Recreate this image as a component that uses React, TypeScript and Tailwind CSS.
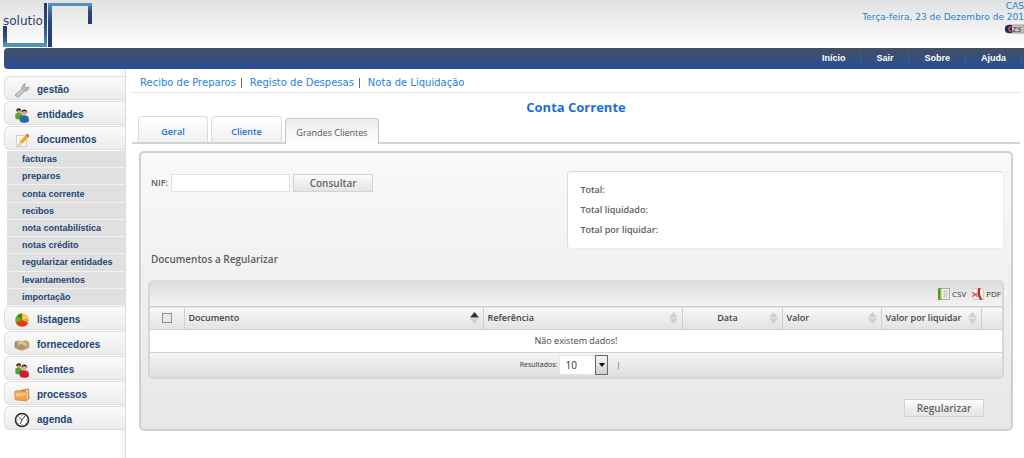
import { ReactNode } from "react";

type MenuItem = {
  label: string;
  icon: ReactNode;
  children?: string[];
};

const Wrench = () => (
  <svg viewBox="0 0 16 16" className="size-4">
    <path d="M2.600 14.800.9 13 7.800 7.200C7.200 4.800 8.600 2.200 11.500 1.500L10.500 4.300 12 5.800l2.900-1c.3 2.900-2.100 4.900-4.500 4.500L4.500 14.900Z" fill="#b8b8b8" stroke="#9a9a9a" strokeWidth=".7" />
    <path d="m3 13.500 6.500-5.500" stroke="#e6e6e6" strokeWidth="1" />
  </svg>
);

const People = ({ front, back }: { front: string; back: string }) => (
  <svg viewBox="0 0 16 16" className="size-4">
    <path d="M1.200 7.200C2 5.200 7 5.200 8 7.200l.5 4.300c-2 1.200-5 1.200-7 .3Z" fill={back} />
    <circle cx="4.800" cy="4" r="2.300" fill="#c99b70" />
    <path d="M2.300 4.300C2 .3 7.400.3 7.300 4L5 3Z" fill="#27231f" />
    <path d="M5.500 10.500C6 7.500 13.500 7.500 14.600 10.500l.5 3.700c-2.500 2-7 2-9.300 0Z" fill={front} />
    <circle cx="10.300" cy="5.600" r="2.500" fill="#d9ae86" />
    <path d="M7.500 6C6.800 1.200 13.700 1.200 13.200 6l-1.600-1.900-2.700.2Z" fill="#1f1c1a" />
  </svg>
);

const Pencil = () => (
  <svg viewBox="0 0 16 16" className="size-4">
    <path d="M2.500 3.500h8l2 2v9h-10Z" fill="#fafafa" stroke="#c4c4c4" strokeWidth=".8" />
    <path d="M4.500 7h5M4.500 9h4" stroke="#c9c9c9" strokeWidth=".7" />
    <path d="m5 10.500 6.500-7.200 2.600 2.200-6.600 7Z" fill="#f5a623" />
    <path d="m5 10.500 1-.9 2.500 2.200-1 .9-3.200 1Z" fill="#eed3a1" />
    <path d="m11.500 3.300 1-1.100c1-.5 2.600.8 2.500 2l-.9 1.300Z" fill="#e2574c" />
    <path d="m4.300 13.700.3-1.200.9.8Z" fill="#333" />
  </svg>
);

const Pie = () => (
  <svg viewBox="0 0 16 16" className="size-4">
    <circle cx="8" cy="8" r="6.600" fill="#e8a91a" />
    <path d="M8 8V1.400A6.600 6.600 0 0 0 2 10.800Z" fill="#6cab24" />
    <path d="M8 8 2 10.800A6.600 6.600 0 0 0 14 10.800Z" fill="#dc3a20" />
    <path d="M8 8V1.400A6.600 6.600 0 0 0 3.400 3.400Z" fill="#3f8a1f" />
    <path d="M8.600 2A6 6 0 0 1 13.800 7L8.600 7.200Z" fill="#f6d243" />
  </svg>
);

const Handshake = () => (
  <svg viewBox="0 0 16 16" className="size-4">
    <path d="m.8 5 3-1.500 4 .5 4.200-.8 3.200 2v5.600l-2.500 1.200-4 1.500-3.500-.2L.8 11Z" fill="#bfa070" />
    <path d="m3.500 4.500 4-.3 5 2.300-.5 3-4.500-2.700-2.500.8Z" fill="#ddc59a" />
    <path d="m4 9.500 3.500 2.500M6 8.500l3.500 2.800M8.500 8l3 2.500" stroke="#8b7048" strokeWidth=".7" />
    <path d="M.8 5 2.600 4v7.300l-1.800-.5Z" fill="#8f8a78" />
  </svg>
);

const Folder = () => (
  <svg viewBox="0 0 16 16" className="size-4">
    <path d="M6 3 14.800 1.500l.6 10.300L12.500 14Z" fill="#d98032" />
    <path d="m11 3.200 2.600-.5.200 9.300-1.800 1Z" fill="#fff1dd" />
    <path d="M.7 4.300 5 3.500l1 .8 6-.6.6 10.300-11.300-1.200Z" fill="#f2a04b" stroke="#cf7727" strokeWidth=".6" />
    <path d="m1.500 6 9.900-.6.200 3L2 10Z" fill="#f9c283" />
  </svg>
);

const Clock = () => (
  <svg viewBox="0 0 16 16" className="size-4">
    <circle cx="8" cy="8" r="6.500" fill="#f8f8f8" stroke="#2b2b2b" strokeWidth="1.500" />
    <path d="M8 2.800v1M8 12.200v1M2.800 8h1M12.200 8h1M4.400 4.400l.6.6M11 11l.6.6M4.400 11.600l.6-.6" stroke="#666" strokeWidth=".8" />
    <path d="M5 5.500 8 8l3-4.200M8 8l-1.800 4" stroke="#333" strokeWidth=".9" fill="none" />
  </svg>
);

const menu: MenuItem[] = [
  { label: "gestão", icon: <Wrench /> },
  { label: "entidades", icon: <People front="#2867ae" back="#5aa832" /> },
  {
    label: "documentos",
    icon: <Pencil />,
    children: [
      "facturas",
      "preparos",
      "conta corrente",
      "recibos",
      "nota contabilística",
      "notas crédito",
      "regularizar entidades",
      "levantamentos",
      "importação",
    ],
  },
  { label: "listagens", icon: <Pie /> },
  { label: "fornecedores", icon: <Handshake /> },
  { label: "clientes", icon: <People front="#cf1f2b" back="#4aa43a" /> },
  { label: "processos", icon: <Folder /> },
  { label: "agenda", icon: <Clock /> },
];

const columns = [
  { label: "Documento", align: "text-left", sorted: true },
  { label: "Referência", align: "text-left" },
  { label: "Data", align: "text-center" },
  { label: "Valor", align: "text-left" },
  { label: "Valor por liquidar", align: "text-left" },
];

const Logo = () => (
  <svg width="96" height="48" viewBox="0 0 96 48" role="img" aria-label="solutio">
    <defs>
      <linearGradient id="down" x1="0" y1="0" x2="0" y2="1">
        <stop offset="0" stopColor="#27386b" />
        <stop offset=".5" stopColor="#2d4a7d" />
        <stop offset="1" stopColor="#4f93b9" />
      </linearGradient>
      <linearGradient id="up" x1="0" y1="1" x2="0" y2="0">
        <stop offset="0" stopColor="#27386b" />
        <stop offset=".6" stopColor="#2d4a7d" />
        <stop offset="1" stopColor="#4f93b9" />
      </linearGradient>
    </defs>
    <rect x="3" y="26" width="4" height="21" fill="url(#down)" />
    <rect x="44" y="3" width="3" height="44" fill="url(#down)" />
    <rect x="3" y="43" width="44" height="4" fill="#4f93b9" />
    <rect x="48" y="3" width="4" height="44" fill="url(#up)" />
    <rect x="88" y="3" width="4" height="21" fill="url(#up)" />
    <rect x="48" y="3" width="44" height="3" fill="#4f93b9" />
    <text x="3" y="25" className="font-['DejaVu_Sans',sans-serif] text-[12px]" fill="#2b3c6e">solutio</text>
  </svg>
);

const SortArrows = ({ sorted }: { sorted?: boolean }) => (
  <svg width="9" height="12" viewBox="0 0 9 12" className="shrink-0">
    <path d="M4.500 0 9 5.500H0Z" fill={sorted ? "#333" : "#cfcfcf"} />
    <path d="M0 6.500h9L4.500 12Z" fill="#cfcfcf" />
  </svg>
);

const CsvIcon = () => (
  <svg width="12" height="12" viewBox="0 0 12 12">
    <rect x="2" y=".5" width="9.500" height="11" fill="#f4f4f4" stroke="#9a9a9a" strokeWidth=".8" />
    <path d="M4.500 3h6M4.500 5h6M4.500 7h6M4.500 9h6M6.500 2v8M8.500 2v8" stroke="#b5bfb5" strokeWidth=".6" />
    <path d="M0 .3h3.300v11.400H0Z" fill="#4d9a1c" />
    <path d="M2 1h.8v10H2Z" fill="#9fd05f" />
  </svg>
);

const PdfIcon = () => (
  <svg width="12" height="12" viewBox="0 0 12 12">
    <path d="M1 .5h9l1.500 1.500v9.500H1Z" fill="#faf6f6" stroke="#c9bcbc" strokeWidth=".7" />
    <path d="M6 .3h2.800C7 4 8 9 11 11.700H8C5.800 9 5 4 6 .3Z" fill="#cb2020" />
    <path d="M.3 4.500 3.500 6.500 6 5.500M.5 8.500 3.500 6.500 5.500 8.800" fill="none" stroke="#d23a3a" strokeWidth="1.100" />
  </svg>
);

const buttonStyle =
  "h-[18px] w-20 border border-[#d3d3d3] bg-gradient-to-b from-[#fbfbfb] to-[#e4e4e4] text-[10px] leading-none font-semibold text-[#666]";

function Header() {
  return (
    <header>
      <div className="flex h-12 justify-between overflow-hidden bg-gradient-to-b from-[#e1e1e1] to-white">
        <Logo />
        <div className="flex flex-col items-end font-['DejaVu_Sans',Verdana,sans-serif] text-[9px] leading-[11px] text-[#2a80cf]">
          <span className="pt-px">CAS</span>
          <span>Terça-feira, 23 de Dezembro de 201</span>
          <svg width="20" height="10" viewBox="0 0 20 10" className="mt-px">
            <path d="M20 1H5a4 4 0 0 0 0 8h15Z" fill="#cfcbc8" stroke="#77716f" strokeWidth=".6" />
            <path d="M5 1h3v8H5a4 4 0 0 1 0-8Z" fill="#23245c" />
            <path d="M7.500 3C4 2 4 8 7.500 7" fill="none" stroke="#e06a60" strokeWidth="1.300" />
            <text x="8" y="8" fill="#6f6a67" className="text-[7px] font-bold italic">ZS</text>
          </svg>
        </div>
      </div>
      <nav className="ml-1 flex h-[21px] items-center justify-end rounded-l bg-gradient-to-b from-[#434f62] to-[#284e98] pb-[2px] font-['Liberation_Sans',Arial,sans-serif] text-[9px] font-bold text-white">
        {["Início", "Sair", "Sobre", "Ajuda"].map((label) => (
          <a key={label} href="#" className="border-r border-[#2463ad] px-[15px] leading-3 last:mr-[2px]">
            {label}
          </a>
        ))}
      </nav>
    </header>
  );
}

function Sidebar() {
  return (
    <aside className="w-[126px] shrink-0 border-r border-[#dcdcdc] bg-gradient-to-r from-white from-95% to-[#f1f1f1] pt-[7px] pl-1 font-['Liberation_Sans',Arial,sans-serif] font-bold text-[#1c4474]">
      <ul>
        {menu.map((item) => (
          <li key={item.label}>
            <a
              href="#"
              className="mb-px flex h-6 items-center gap-[7px] rounded-l-md border border-r-0 border-[#dfdfdf] bg-gradient-to-b from-[#fafafa] to-[#ececec] pt-1 pl-[9px] text-[10px] leading-3"
            >
              {item.icon}
              {item.label}
            </a>
            {item.children && (
              <ul className="flex h-[155px] flex-col pl-[3px] text-[9px]">
                {item.children.map((child) => (
                  <li key={child} className="flex flex-1 items-center border-b border-[#f2f2f2] bg-[#e0e0e0] pl-[15px]">
                    <a href="#" className="leading-3">{child}</a>
                  </li>
                ))}
              </ul>
            )}
          </li>
        ))}
      </ul>
    </aside>
  );
}

function Tabs() {
  const base = "h-[26px] rounded-t border border-b-0 pt-1 text-[9px] leading-3";
  return (
    <div role="tablist" className="flex items-end gap-[3px] border-b-2 border-[#d3d3d3] pl-[6px]">
      <button role="tab" className={`${base} w-[70px] border-[#dcdcdc] bg-gradient-to-b from-white to-[#f0f0f0] font-semibold text-[#1873d8]`}>
        Geral
      </button>
      <button role="tab" className={`${base} w-[71px] border-[#dcdcdc] bg-gradient-to-b from-white to-[#f0f0f0] font-semibold text-[#1873d8]`}>
        Cliente
      </button>
      <button role="tab" aria-selected="true" className={`${base} -mb-[2px] h-7 w-[94px] border-[#c6c6c6] bg-gradient-to-b from-[#ebebeb] to-white pb-[2px] text-[#555]`}>
        Grandes Clientes
      </button>
    </div>
  );
}

function DocumentsTable() {
  return (
    <div className="overflow-hidden rounded-[5px] border-2 border-[#d6d6d6] border-t-[#dcdcdc]">
      <div className="flex h-6 items-center justify-end gap-[6px] bg-gradient-to-b from-[#dcdcdc] to-[#f4f4f4] pr-px text-[8px] text-[#333]">
        <button className="flex items-center gap-[2px]">
          <CsvIcon /> CSV
        </button>
        <button className="flex items-center gap-[2px]">
          <PdfIcon /> PDF
        </button>
      </div>
      <table className="w-full table-fixed border-collapse text-[9px] text-[#444]">
        <colgroup>
          <col className="w-[34px]" />
          <col />
          <col className="w-[199px]" />
          <col className="w-[100px]" />
          <col className="w-[99px]" />
          <col className="w-[100px]" />
          <col className="w-[21px]" />
        </colgroup>
        <thead>
          <tr className="h-[23px] border-y border-[#cfcfcf] bg-gradient-to-b from-[#f7f7f7] to-[#e3e3e3]">
            <th className="p-0">
              <input
                type="checkbox"
                aria-label="Seleccionar todos"
                className="mx-auto block size-[10px] appearance-none border border-[#8f8f8f] bg-[#e9e9e9]"
              />
            </th>
            {columns.map((col) => (
              <th key={col.label} className="border-l border-[#cfcfcf] p-0 font-semibold">
                <div className="flex items-center pr-1 pl-1">
                  <span className={`flex-1 whitespace-nowrap ${col.align}`}>{col.label}</span>
                  <SortArrows sorted={col.sorted} />
                </div>
              </th>
            ))}
            <th className="border-l border-[#cfcfcf] p-0" />
          </tr>
        </thead>
        <tbody>
          <tr className="h-[23px] border-b border-[#d4d4d4] bg-white">
            <td colSpan={7} className="p-0 text-center">Não existem dados!</td>
          </tr>
        </tbody>
      </table>
      <div className="flex h-6 items-center justify-center gap-[2px] bg-gradient-to-b from-[#f5f5f5] to-[#dfdfdf] pr-3 text-[#333]">
        <label htmlFor="results" className="text-[7px]">Resultados:</label>
        <span className="relative">
          <select id="results" className="block h-5 w-[49px] appearance-none border border-[#e4e4e4] bg-white pl-[5px] text-[10px] leading-none">
            <option>10</option>
            <option>25</option>
            <option>50</option>
          </select>
          <span className="pointer-events-none absolute inset-y-0 right-0 flex w-[13px] items-center justify-center border border-[#666] bg-gradient-to-b from-[#f5f5f5] to-[#d0d0d0]">
            <svg width="6" height="4" viewBox="0 0 6 4">
              <path d="M0 0h6L3 4Z" fill="#000" />
            </svg>
          </span>
        </span>
        <span className="pl-[6px] text-[7px]">|</span>
      </div>
    </div>
  );
}

export default function App() {
  return (
    <div className="flex min-h-screen flex-col overflow-x-hidden bg-white">
      <Header />
      <div className="flex flex-1">
        <Sidebar />
        <main className="min-w-0 flex-1 pr-1 pl-[6px] font-['Open_Sans','Trebuchet_MS',sans-serif] text-[#5c5c5c]">
          <nav className="flex h-6 items-center border-b border-[#e2e2e2] pt-1 pl-2 font-['DejaVu_Sans',Verdana,sans-serif] text-[10px] leading-[10px] text-[#2a80d8]">
            <a href="#" className="pr-[5px]">Recibo de Preparos</a>
            <a href="#" className="border-l border-[#666] pr-[5px] pl-2">Registo de Despesas</a>
            <a href="#" className="border-l border-[#666] pr-[5px] pl-2">Nota de Liquidação</a>
          </nav>
          <h1 className="pt-[6px] text-center text-[13px] leading-[17px] font-bold text-[#1b6fd6]">Conta Corrente</h1>
          <Tabs />
          <section className="mt-[7px] mr-[7px] ml-[7px] rounded-[5px] border-2 border-[#d0d0d0] bg-gradient-to-b from-[#f9f9f9] to-[#e7e7e7] px-[7px] pb-3">
            <div className="flex items-start justify-between pt-[18px]">
              <form className="flex items-center gap-[3px] pt-[3px] pl-[3px]">
                <label htmlFor="nif" className="text-[9px] font-semibold">NIF:</label>
                <input id="nif" type="text" className="h-[18px] w-[119px] border border-[#e0e0e0] bg-white px-1 text-[10px]" />
                <button type="button" className={buttonStyle}>Consultar</button>
              </form>
              <dl className="w-[51%] rounded border border-[#ececec] border-t-[#d8d8d8] border-l-[#dcdcdc] bg-white px-3 py-2 text-[9px] leading-5 font-semibold">
                <dt>Total:</dt>
                <dt>Total liquidado:</dt>
                <dt>Total por liquidar:</dt>
              </dl>
            </div>
            <h2 className="pt-[2px] pb-[13px] pl-[3px] text-[10px] leading-4 font-semibold">Documentos a Regularizar</h2>
            <DocumentsTable />
            <div className="flex justify-end pt-5 pr-5">
              <button className={buttonStyle}>Regularizar</button>
            </div>
          </section>
        </main>
      </div>
    </div>
  );
}
